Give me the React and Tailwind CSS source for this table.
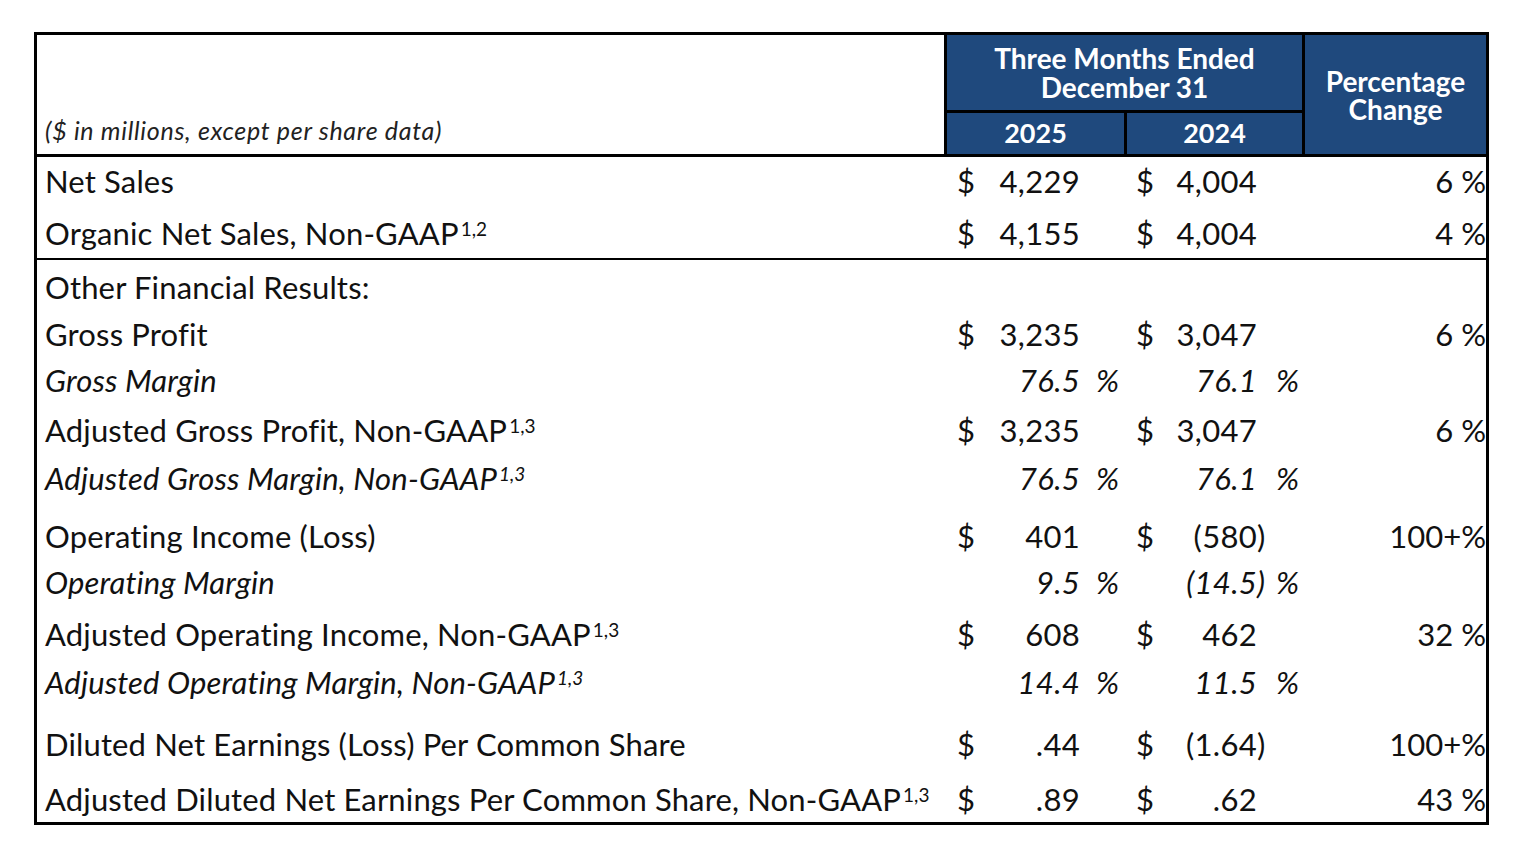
const rows = [
  { label: 'Other Financial Results:', h: 47 },
  { label: 'Gross Profit', h: 46, a: { d: true, n: '3,235' }, b: { d: true, n: '3,047' }, pct: '6 %' },
  { label: 'Gross Margin', italic: true, h: 50, a: { n: '76.5', pc: true }, b: { n: '76.1', pc: true } },
  { label: 'Adjusted Gross Profit, Non-GAAP', sup: '1,3', h: 48, a: { d: true, n: '3,235' }, b: { d: true, n: '3,047' }, pct: '6 %' },
  { label: 'Adjusted Gross Margin, Non-GAAP', sup: '1,3', italic: true, h: 58, a: { n: '76.5', pc: true }, b: { n: '76.1', pc: true } },
  { label: 'Operating Income (Loss)', h: 46, a: { d: true, n: '401' }, b: { d: true, n: '(580', p: true }, pct: '100+%' },
  { label: 'Operating Margin', italic: true, h: 52, a: { n: '9.5', pc: true }, b: { n: '(14.5', p: true, pc: true } },
  { label: 'Adjusted Operating Income, Non-GAAP', sup: '1,3', h: 48, a: { d: true, n: '608' }, b: { d: true, n: '462' }, pct: '32 %' },
  { label: 'Adjusted Operating Margin, Non-GAAP', sup: '1,3', italic: true, h: 62, a: { n: '14.4', pc: true }, b: { n: '11.5', pc: true } },
  { label: 'Diluted Net Earnings (Loss) Per Common Share', h: 55, a: { d: true, n: '.44' }, b: { d: true, n: '(1.64', p: true }, pct: '100+%' },
  { label: 'Adjusted Diluted Net Earnings Per Common Share, Non-GAAP', sup: '1,3', h: 47, a: { d: true, n: '.89' }, b: { d: true, n: '.62' }, pct: '43 %' },
];

function Value({ v, italic, right, pcPad }) {
  if (!v) return <div className="flex-1" />;
  return (
    <div className={`flex flex-1 ${italic ? 'italic' : ''}`}>
      <span className="pl-[10px] w-[30px]">{v.d ? '$' : ''}</span>
      <span className="flex-1 text-right">{v.n}</span>
      <span className="w-[10px]">{v.p ? ')' : ''}</span>
      <span className={`${right} ${pcPad}`}>{v.pc ? '%' : ''}</span>
    </div>
  );
}

function Row({ r }) {
  return (
    <div className="flex items-start text-[31px] leading-[48px] text-[#111]" style={{ height: r.h }}>
      <div className={`w-[910px] pl-[8px] whitespace-nowrap tracking-[0.15px] ${r.italic ? 'italic' : ''}`}>
        {r.label}
        {r.sup && <sup className="text-[19px] -top-[0.5em] ml-[2px] tracking-normal">{r.sup}</sup>}
      </div>
      <div className="w-[179px] flex tracking-[0.3px]">
        <Value v={r.a} italic={r.italic} right="w-[36px]" pcPad="pl-[6px]" />
      </div>
      <div className="w-[179px] flex tracking-[0.3px]">
        <Value v={r.b} italic={r.italic} right="w-[38px]" pcPad="pl-[9px]" />
      </div>
      <div className="w-[181px] text-right">{r.pct || ''}</div>
    </div>
  );
}

export default function App() {
  return (
    <div className="w-[1532px] h-[848px] bg-white pt-[32px] pl-[34px] font-['Lato',sans-serif]">
      <div className="w-[1455px] border-[3px] border-black">
        {/* header */}
        <div className="flex h-[122px] border-b-[3px] border-black">
          <div className="w-[907px] flex items-end pl-[8px] pb-[5px] italic text-[25px] tracking-[0.7px] text-[#222]">
            ($ in millions, except per share data)
          </div>
          <div className="flex-1 flex border-l-[3px] border-black bg-[#1f497d] text-white font-bold">
            <div className="w-[358px] flex flex-col border-r-[3px] border-black">
              <div className="h-[78px] flex flex-col items-center justify-center text-[28px] leading-[29px] border-b-[3px] border-black">
                <span>Three Months Ended</span>
                <span>December 31</span>
              </div>
              <div className="flex-1 flex text-[27px]">
                <div className="w-[180px] flex items-center justify-center border-r-[3px] border-black">2025</div>
                <div className="flex-1 flex items-center justify-center">2024</div>
              </div>
            </div>
            <div className="flex-1 flex flex-col items-center justify-center text-[28px] leading-[28px]">
              <span>Percentage</span>
              <span>Change</span>
            </div>
          </div>
        </div>

        {/* net sales */}
        <div className="border-b-2 border-black">
          <Row r={{ label: 'Net Sales', h: 52, a: { d: true, n: '4,229' }, b: { d: true, n: '4,004' }, pct: '6 %' }} />
          <Row r={{ label: 'Organic Net Sales, Non-GAAP', sup: '1,2', h: 49, a: { d: true, n: '4,155' }, b: { d: true, n: '4,004' }, pct: '4 %' }} />
        </div>

        {/* other results */}
        <div className="pt-[3px]">
          {rows.map((r, i) => <Row key={i} r={r} />)}
        </div>
      </div>
    </div>
  );
}
